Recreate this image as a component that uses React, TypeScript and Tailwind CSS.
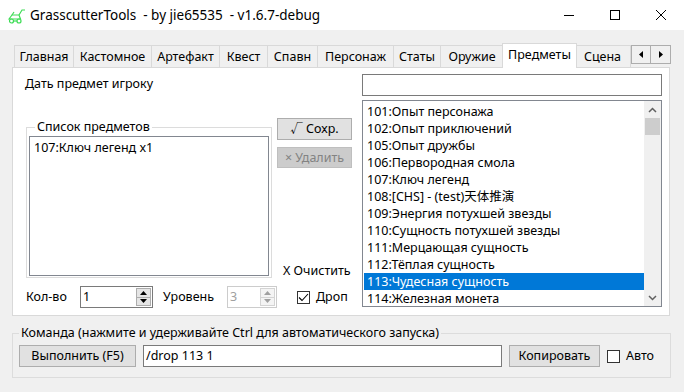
import React from 'react';

const TABS: { name: string; w: number }[] = [
  { name: 'Главная', w: 60 },
  { name: 'Кастомное', w: 78 },
  { name: 'Артефакт', w: 68 },
  { name: 'Квест', w: 48 },
  { name: 'Спавн', w: 50 },
  { name: 'Персонаж', w: 76 },
  { name: 'Статы', w: 47 },
  { name: 'Оружие', w: 63 },
  { name: 'Предметы', w: 71 },
  { name: 'Сцена', w: 56 },
];

const ITEMS = [
  '101:Опыт персонажа',
  '102:Опыт приключений',
  '105:Опыт дружбы',
  '106:Первородная смола',
  '107:Ключ легенд',
  '108:[CHS] - (test)天体推演',
  '109:Энергия потухшей звезды',
  '110:Сущность потухшей звезды',
  '111:Мерцающая сущность',
  '112:Тёплая сущность',
  '113:Чудесная сущность',
  '114:Железная монета',
];

const SELECTED = '113:Чудесная сущность';

const Spinner = ({ disabled }: { disabled?: boolean }) => {
  const c = disabled ? '#a0a0a0' : '#000';
  return (
    <div className="flex flex-col w-[15px] h-[18px] mr-[1px]">
      <div className={`flex-1 flex items-center justify-center border ${disabled ? 'border-[#d4d4d4] bg-[#f4f4f4]' : 'border-[#adadad] bg-[#e5e5e5]'}`}>
        <svg width="7" height="4" viewBox="0 0 7 4"><path d="M0 4 L3.5 0 L7 4 Z" fill={c} /></svg>
      </div>
      <div className={`flex-1 flex items-center justify-center border border-t-0 ${disabled ? 'border-[#d4d4d4] bg-[#f4f4f4]' : 'border-[#adadad] bg-[#e5e5e5]'}`}>
        <svg width="7" height="4" viewBox="0 0 7 4"><path d="M0 0 L7 0 L3.5 4 Z" fill={c} /></svg>
      </div>
    </div>
  );
};

const AppIcon = () => (
  <svg width="20" height="16" viewBox="0 0 20 16" fill="none" stroke="#3ddc55" strokeWidth="1.2">
    <path d="M2 11 L5 7 L12 7 L13.5 11 Z" />
    <path d="M12 7 L15 2 L18 2" />
    <path d="M5 7 L7 4" />
    <circle cx="4.5" cy="13" r="2" />
    <circle cx="12" cy="13" r="2" />
    <path d="M6.5 13 L10 13" />
  </svg>
);

export default function App() {
  return (
    <div className="w-[684px] h-[392px] overflow-hidden bg-[#f0f0f0] text-[12.5px] leading-[16px] text-black font-['Noto_Sans','Noto_Sans_CJK_SC',sans-serif]">
      {/* title bar */}
      <div className="h-[30px] bg-white flex items-center">
        <div className="ml-[7px] mr-[3px] mt-[1px]">
          <AppIcon />
        </div>
        <span className="whitespace-pre text-[13.5px]">GrasscutterTools  - by jie65535  - v1.6.7-debug</span>
        <div className="ml-auto flex h-full">
          <div className="w-[46px] flex items-center justify-center">
            <svg width="10" height="10" viewBox="0 0 10 10"><path d="M0 5.5 H10" stroke="#000" strokeWidth="1" /></svg>
          </div>
          <div className="w-[46px] flex items-center justify-center">
            <svg width="10" height="10" viewBox="0 0 10 10"><rect x="0.5" y="0.5" width="9" height="9" fill="none" stroke="#000" strokeWidth="1" /></svg>
          </div>
          <div className="w-[46px] flex items-center justify-center">
            <svg width="10" height="10" viewBox="0 0 10 10"><path d="M0 0 L10 10 M10 0 L0 10" stroke="#000" strokeWidth="1" /></svg>
          </div>
        </div>
      </div>

      {/* tabs */}
      <div className="relative pt-[13px] pl-[14px]">
        <div className="flex items-end h-[24px]">
          {TABS.map((t, i) => {
            const sel = t.name === 'Предметы';
            return sel ? (
              <div
                key={t.name}
                style={{ width: t.w + 4 }}
                className="relative z-10 -mx-[2px] -mb-px h-[25px] bg-white border border-b-0 border-[#d9d9d9] flex items-start justify-center pt-[3px]"
              >
                {t.name}
              </div>
            ) : (
              <div
                key={t.name}
                style={{ width: t.w }}
                className={`h-[22px] bg-[#f0f0f0] border-t border-r border-[#d9d9d9] ${i === 0 ? 'border-l' : ''} flex items-center justify-center whitespace-nowrap overflow-hidden`}
              >
                {t.name}
              </div>
            );
          })}
        </div>
        <div className="absolute left-[631px] top-[15px] z-20 flex h-[19px] border border-[#adadad] bg-[#f0f0f0]">
          <div className="w-[19px] flex items-center justify-center border-r border-[#adadad]">
            <svg width="4" height="7" viewBox="0 0 4 7"><path d="M4 0 L0 3.5 L4 7 Z" fill="#000" /></svg>
          </div>
          <div className="w-[19px] flex items-center justify-center">
            <svg width="4" height="7" viewBox="0 0 4 7"><path d="M0 0 L4 3.5 L0 7 Z" fill="#000" /></svg>
          </div>
        </div>
      </div>

      {/* tab page */}
      <div className="ml-[12px] w-[658px] h-[249px] bg-white border border-[#d9d9d9] flex">
        {/* left column */}
        <div className="w-[349px] flex flex-col">
          <div className="pt-[8px] pl-[12px]">Дать предмет игроку</div>
          <div className="mt-[26px] pl-[13px] flex items-start">
            <div className="relative mt-[9px] w-[246px] h-[151px] border border-[#dcdcdc]">
              <span className="absolute left-[8px] -top-[9px] bg-white px-[2px]">Список предметов</span>
              <div className="mt-[8px] mx-[2px] h-[140px] border border-[#828790] pl-[4px] pt-[2px] leading-[17px]">
                107:Ключ легенд x1
              </div>
            </div>
            <div className="ml-[5px] w-[75px] flex flex-col">
              <div className="h-[22px] bg-[#e1e1e1] border border-[#adadad] flex items-center justify-center">√ Сохр.</div>
              <div className="mt-[7px] h-[21px] bg-[#cccccc] border border-[#bfbfbf] text-[#838383] flex items-center justify-center">× Удалить</div>
              <div className="mt-[95px] pl-[6px]">X Очистить</div>
            </div>
          </div>
          <div className="mt-[7px] pl-[13px] flex items-center h-[22px]">
            <span className="w-[54px]">Кол-во</span>
            <div className="w-[73px] h-[22px] border border-[#7a7a7a] flex items-center">
              <span className="flex-1 pl-[2px]">1</span>
              <Spinner />
            </div>
            <span className="ml-[10px] w-[64px]">Уровень</span>
            <div className="w-[50px] h-[22px] border border-[#cccccc] flex items-center">
              <span className="flex-1 pl-[2px] text-[#a0a0a0]">3</span>
              <Spinner disabled />
            </div>
            <div className="ml-[20px] w-[13px] h-[13px] border border-[#333] flex items-center justify-center">
              <svg width="11" height="9" viewBox="0 0 11 9"><path d="M1 4.5 L4 7.5 L10 1" fill="none" stroke="#000" strokeWidth="1.1" /></svg>
            </div>
            <span className="ml-[6px]">Дроп</span>
          </div>
        </div>

        {/* right column */}
        <div className="w-[300px] pt-[6px] flex flex-col">
          <div className="h-[22px] border border-[#7a7a7a]" />
          <div className="mt-[4px] h-[207px] border border-[#828790] flex overflow-hidden">
            <div className="flex-1 pt-[2px] overflow-hidden">
              {ITEMS.map(it => (
                <div
                  key={it}
                  className={`h-[17px] leading-[17px] pl-[3px] ml-px whitespace-nowrap ${it === SELECTED ? 'bg-[#0078d7] text-white' : ''}`}
                >
                  {it}
                </div>
              ))}
            </div>
            <div className="w-[17px] bg-[#f0f0f0] flex flex-col">
              <div className="h-[17px] flex items-center justify-center">
                <svg width="9" height="6" viewBox="0 0 9 6"><path d="M1 5 L4.5 1.5 L8 5" fill="none" stroke="#606060" strokeWidth="1.5" /></svg>
              </div>
              <div className="mx-px h-[17px] bg-[#cdcdcd]" />
              <div className="flex-1" />
              <div className="h-[17px] flex items-center justify-center">
                <svg width="9" height="6" viewBox="0 0 9 6"><path d="M1 1 L4.5 4.5 L8 1" fill="none" stroke="#606060" strokeWidth="1.5" /></svg>
              </div>
            </div>
          </div>
        </div>
      </div>

      {/* command group */}
      <div className="relative mt-[17px] ml-[12px] w-[659px] h-[45px] border border-[#dcdcdc]">
        <span className="absolute left-[6px] -top-[9px] bg-[#f0f0f0] px-[2px]">
          Команда (нажмите и удерживайте Ctrl для автоматического запуска)
        </span>
        <div className="pt-[11px] pl-[6px] flex items-center">
          <div className="w-[117px] h-[22px] bg-[#e1e1e1] border border-[#adadad] flex items-center justify-center">Выполнить (F5)</div>
          <div className="ml-[7px] w-[359px] h-[22px] bg-white border border-[#7a7a7a] flex items-center pl-[2px]">/drop 113 1</div>
          <div className="ml-[7px] w-[91px] h-[22px] bg-[#e1e1e1] border border-[#adadad] flex items-center justify-center">Копировать</div>
          <div className="ml-[7px] w-[13px] h-[13px] bg-white border border-[#333]" />
          <span className="ml-[6px]">Авто</span>
        </div>
      </div>
    </div>
  );
}
